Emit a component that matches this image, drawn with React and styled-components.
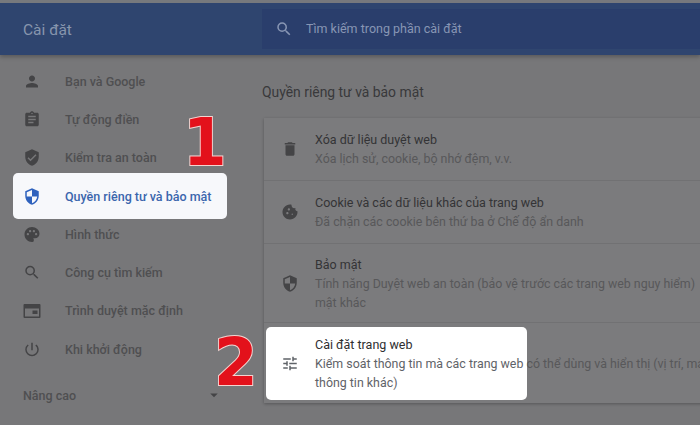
import React from "react";
import styled, { createGlobalStyle } from "styled-components";
import {
  MdPerson, MdAssignment, MdVerifiedUser, MdSecurity, MdPalette, MdSearch,
  MdPowerSettingsNew, MdDelete, MdCookie, MdTune, MdArrowDropDown,
} from "react-icons/md";

const Global = createGlobalStyle`
  html, body { margin: 0; padding: 0; width: 700px; height: 425px; overflow: hidden; background: #777779; }
  * { box-sizing: border-box; }
`;

const Page = styled.div`
  position: relative; width: 700px; height: 425px; overflow: hidden;
  background: #777779; font-family: Roboto, "Liberation Sans", sans-serif;
  display: flex; flex-direction: column;
`;
const Header = styled.header`
  height: 55px; flex: none; border-top: 3px solid #77797d;
  background: #2f456f; display: flex; align-items: center;
  box-shadow: 0 2px 4px rgba(0,0,0,.25); z-index: 1;
`;
const Brand = styled.div`
  width: 262px; padding-left: 23px; color: #8795ad; font-size: 15.5px;
  position: relative; top: 1px;
`;
const Search = styled.div`
  flex: 1; height: 40px; background: #2a3e6c; display: flex; align-items: center;
  padding-left: 13px; gap: 13px; color: #8896b4; font-size: 12.5px; margin-top: -1px;
`;
const Body = styled.div`flex: 1; display: flex; min-height: 0;`;
const Side = styled.nav`
  width: 262px; flex: none; padding-top: 7px; display: flex; flex-direction: column;
`;
const Item = styled.div`
  position: relative; height: 38.3px; display: flex; align-items: center;
  padding-left: 23px; gap: 24px; font-size: 12.5px; font-weight: 500;
  color: ${p => (p.$active ? "#3b66ad" : "#4f4f51")};
  & > * { position: relative; }
  ${p => p.$active && `
    &::before {
      content: ""; position: absolute; left: 13px; width: 214px; top: -4px; bottom: -4px;
      background: #f7f8fb; border-radius: 5px;
    }
  `}
`;
const IconBox = styled.span`
  width: 18px; height: 18px; flex: none; display: flex; align-items: center; justify-content: center;
  color: ${p => p.$color || "#444446"};
  svg { display: block; }
`;
const More = styled.div`
  display: flex; align-items: center; justify-content: space-between;
  margin-top: 18px; padding: 0 26px 0 23px; width: 240px;
  font-size: 12.5px; font-weight: 500; color: #4f4f51;
  svg { color: #444446; margin-right: -9px; }
`;
const Main = styled.main`flex: 1; min-width: 0; padding-top: 28px;`;
const SectionTitle = styled.h2`
  margin: 0 0 17px; font-weight: 400; font-size: 13.9px; line-height: 18px; color: #39393b;
  white-space: nowrap;
`;
const Card = styled.section`
  margin-left: 2px; width: 480px; background: #7b7b7d;
  box-shadow: 0 1px 3px rgba(0,0,0,.28);
`;
const Row = styled.div`
  position: relative; height: ${p => p.$h}px; display: flex; align-items: center;
  padding-left: 17px; gap: 16px; white-space: nowrap;
  & + & { border-top: 1px solid #717173; }
  & > * { position: relative; }
`;
const Spot = styled.div`
  position: absolute !important; left: 2px; top: 4px; bottom: 3px; width: 261px;
  background: #fff; border-radius: 5px;
`;
const RowText = styled.div`display: flex; flex-direction: column;`;
const Title = styled.div`font-size: 12.5px; line-height: 19px; color: ${p => (p.$on ? "#2e2e30" : "#343436")};`;
const Sub = styled.div`font-size: 12.4px; line-height: 19px; color: #58585a;`;
const Bright = styled.span`color: #5f6368;`;
const Marker = styled.div`
  position: absolute; font-family: "DejaVu Sans", sans-serif; font-weight: 700; font-size: 66px;
  line-height: 66px; color: #e3111b; -webkit-text-stroke: 2px #f4d3d0; paint-order: stroke fill;
  left: ${p => p.$x}px; top: ${p => p.$y}px; z-index: 3;
  transform: scaleX(.95); transform-origin: left center;
`;

const BrowserIcon = () => (
  <svg width="18" height="18" viewBox="0 0 18 18" fill="currentColor">
    <path fillRule="evenodd" d="M1.5 2h15a1 1 0 0 1 1 1v12a1 1 0 0 1-1 1h-15a1 1 0 0 1-1-1V3a1 1 0 0 1 1-1zM2 6.5V14.500h14V6.500z" />
    <rect x="9.500" y="8.500" width="5" height="3.500" />
  </svg>
);

const nav = [
  [MdPerson, "Bạn và Google", 19],
  [MdAssignment, "Tự động điền", 19],
  [MdVerifiedUser, "Kiểm tra an toàn", 19],
  [MdSecurity, "Quyền riêng tư và bảo mật", 19, true],
  [MdPalette, "Hình thức", 19],
  [MdSearch, "Công cụ tìm kiếm", 19],
  [BrowserIcon, "Trình duyệt mặc định", 18],
  [MdPowerSettingsNew, "Khi khởi động", 19],
];

export default function App() {
  return (
    <Page>
      <Global />
      <Header>
        <Brand>Cài đặt</Brand>
        <Search>
          <MdSearch size={18} />
          <span>Tìm kiếm trong phần cài đặt</span>
        </Search>
      </Header>
      <Body>
        <Side>
          {nav.map(([I, label, size, active]) => (
            <Item key={label} $active={active}>
              <IconBox $color={active ? "#2f62bd" : undefined}><I size={size} /></IconBox>
              <span>{label}</span>
            </Item>
          ))}
          <More>
            <span>Nâng cao</span>
            <MdArrowDropDown size={18} />
          </More>
        </Side>
        <Main>
          <SectionTitle>Quyền riêng tư và bảo mật</SectionTitle>
          <Card>
            <Row $h={62}>
              <IconBox><MdDelete size={18} /></IconBox>
              <RowText>
                <Title>Xóa dữ liệu duyệt web</Title>
                <Sub>Xóa lịch sử, cookie, bộ nhớ đệm, v.v.</Sub>
              </RowText>
            </Row>
            <Row $h={63}>
              <IconBox><MdCookie size={18} /></IconBox>
              <RowText>
                <Title>Cookie và các dữ liệu khác của trang web</Title>
                <Sub>Đã chặn các cookie bên thứ ba ở Chế độ ẩn danh</Sub>
              </RowText>
            </Row>
            <Row $h={79}>
              <IconBox><MdSecurity size={19} /></IconBox>
              <RowText>
                <Title>Bảo mật</Title>
                <Sub>Tính năng Duyệt web an toàn (bảo vệ trước các trang web nguy hiểm)</Sub>
                <Sub>mật khác</Sub>
              </RowText>
            </Row>
            <Row $h={81}>
              <Spot />
              <IconBox $color="#5f6368"><MdTune size={19} /></IconBox>
              <RowText>
                <Title $on>Cài đặt trang web</Title>
                <Sub><Bright>Kiểm soát thông tin mà các trang web </Bright>có thể dùng và hiển thị (vị trí, máy ảnh</Sub>
                <Sub><Bright>thông tin khác)</Bright></Sub>
              </RowText>
            </Row>
          </Card>
        </Main>
      </Body>
      <Marker $x={183} $y={110}>1</Marker>
      <Marker $x={214} $y={330}>2</Marker>
    </Page>
  );
}
